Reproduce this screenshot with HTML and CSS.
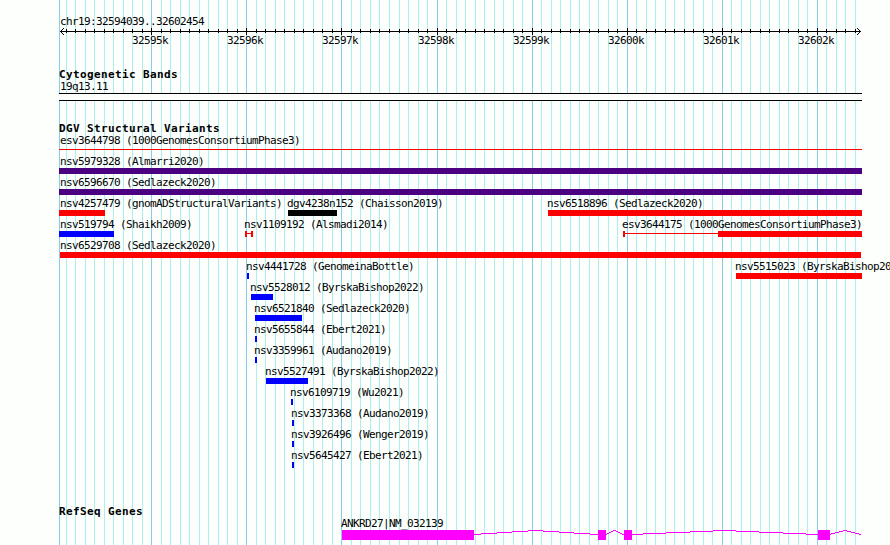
FILE: index.html
```html
<!DOCTYPE html>
<html lang="en">
<head>
<meta charset="utf-8">
<title>chr19:32594039..32602454</title>
<link rel="stylesheet" href="styles.css">
</head>
<body>
<svg class="gridlines" id="gridlines" width="890" height="545"></svg>
<main class="browser">
  <header class="scale">
    <div class="label region">chr19:32594039..32602454</div>
    <svg class="ruler" id="ruler" width="890" height="20"></svg>
  </header>
  <section class="track cytobands">
    <h2 class="title">Cytogenetic Bands</h2>
    <div class="label region">19q13.11</div>
    <div class="band"></div>
  </section>
  <section class="track variants">
    <h2 class="title">DGV Structural Variants</h2>
    <div id="variants"></div>
  </section>
  <section class="track genes">
    <h2 class="title">RefSeq Genes</h2>
    <div class="label gene-name">ANKRD27|NM_032139</div>
    <svg class="gene" width="890" height="15">
      <path class="intron" d="M474 4.5H481M481 3.5H497M497 2.5H512M512 1.5H528M528 .5H543M543 1.5H559M559 2.5H574M574 3.5H590M590 4.5H598"/>
      <path class="intron" d="M606 4.5H607M607 3.5H609M609 2.5H611M611 1.5H613M613 .5H616M616 1.5H618M618 2.5H620M620 3.5H622M622 4.5H624"/>
      <path class="intron" d="M632 4.5H643M643 3.5H666M666 2.5H690M690 1.5H713M713 .5H736M736 1.5H759M759 2.5H783M783 3.5H806M806 4.5H818"/>
      <path class="intron" d="M830 4.5H831M831 3.5H835M835 2.5H839M839 1.5H843M843 .5H847M847 1.5H851M851 2.5H855M855 3.5H859M859 4.5H861"/>
      <path class="exon" d="M342 0h132v10h-132zM598 0h8v10h-8zM624 0h8v10h-8zM818 0h12v10h-12z"/>
    </svg>
  </section>
</main>
<script src="script.js"></script>
</body>
</html>
```
FILE: styles.css
```css
body {
  margin: 0;
  width: 890px;
  height: 545px;
  overflow: hidden;
  background: #fdfffc;
  color: #000;
  font: 11px/13px "DejaVu Sans Mono", monospace;
}
svg {
  display: block;
  shape-rendering: crispEdges;
}
.gridlines {
  position: absolute;
  top: 0;
  left: 0;
}
.minor { fill: #afeeee; }
.major { fill: #87ceeb; }
.browser {
  position: relative;
  display: flex;
  flex-direction: column;
  height: 545px;
  padding-top: 15px;
  box-sizing: border-box;
}
.label {
  height: 13px;
  white-space: pre;
  letter-spacing: -0.622px;
}
.region { margin-left: 60px; }
.axis { fill: #000; }
.head {
  fill: none;
  stroke: #000;
}
.tick-label {
  font-size: 11px;
  letter-spacing: -0.622px;
}
.title {
  margin: 0 0 0 59px;
  height: 12px;
  font-size: 11px;
  line-height: 13px;
  font-weight: bold;
  letter-spacing: 0.378px;
  white-space: pre;
}
.cytobands { margin-top: 20px; }
.band {
  width: 803px;
  height: 6px;
  margin-left: 59px;
  background: #fdfffc;
  border: solid #000;
  border-width: 1px 0;
}
.variants { margin-top: 21px; }
.row {
  display: grid;
  height: 21px;
  grid-template-columns: 890px;
}
.feature { grid-area: 1 / 1; }
.glyph {
  display: flex;
  height: 6px;
}
.bar { background: currentColor; }
.line {
  height: 1px;
  margin-top: 2px;
  background: currentColor;
}
.red { color: #f00; }
.blue { color: #00f; }
.indigo { color: #4b0082; }
.black { color: #000; }
.genes { margin-top: 35px; }
.gene-name { margin: 0 0 0 341px; }
.exon { fill: #f0f; }
.intron {
  fill: none;
  stroke: #f0f;
}
```
FILE: script.js
```js
const START = 32594039;
const toX = bp => Math.round(60 + (bp - START) * 0.09506);

let lines = '<rect class="major" x="59" width="1" height="545"/>';
let ruler = '<rect class="axis" x="60" y="3" width="801" height="1"/>' +
  '<path class="head" d="M64 0L60.5 3.5L64 7M857 0L860.5 3.5L857 7"/>';

for (let bp = 32594100; bp <= 32602400; bp += 100) {
  const x = toX(bp);
  const major = bp % 1000 === 0;
  lines += `<rect class="${major ? 'major' : 'minor'}" x="${x}" width="1" height="545"/>`;
  ruler += `<rect class="axis" x="${x}" y="${major ? 0 : 1}" width="1" height="${major ? 7 : 4}"/>`;
  if (major) ruler += `<text class="tick-label" x="${x - 19}" y="16">${bp / 1000}k</text>`;
}
document.getElementById('gridlines').innerHTML = lines;
document.getElementById('ruler').innerHTML = ruler;

// name, label x, glyph x, colour, segments (positive: bar, negative: line)
const rows = [
  [['esv3644798 (1000GenomesConsortiumPhase3)', 60, 59, 'red', [-803]]],
  [['nsv5979328 (Almarri2020)', 60, 59, 'indigo', [803]]],
  [['nsv6596670 (Sedlazeck2020)', 60, 59, 'indigo', [803]]],
  [['nsv4257479 (gnomADStructuralVariants)', 60, 59, 'red', [46]],
   ['dgv4238n152 (Chaisson2019)', 287, 288, 'black', [49]],
   ['nsv6518896 (Sedlazeck2020)', 547, 548, 'red', [314]]],
  [['nsv519794 (Shaikh2009)', 60, 59, 'blue', [55]],
   ['nsv1109192 (Alsmadi2014)', 244, 245, 'red', [2, -4, 2]],
   ['esv3644175 (1000GenomesConsortiumPhase3)', 622, 623, 'red', [2, -93, 144]]],
  [['nsv6529708 (Sedlazeck2020)', 60, 60, 'red', [801]]],
  [['nsv4441728 (GenomeinaBottle)', 246, 247, 'blue', [2]],
   ['nsv5515023 (ByrskaBishop2022)', 735, 736, 'red', [126]]],
  [['nsv5528012 (ByrskaBishop2022)', 250, 251, 'blue', [22]]],
  [['nsv6521840 (Sedlazeck2020)', 254, 255, 'blue', [47]]],
  [['nsv5655844 (Ebert2021)', 254, 255, 'blue', [2]]],
  [['nsv3359961 (Audano2019)', 254, 255, 'blue', [2]]],
  [['nsv5527491 (ByrskaBishop2022)', 265, 266, 'blue', [42]]],
  [['nsv6109719 (Wu2021)', 290, 291, 'blue', [2]]],
  [['nsv3373368 (Audano2019)', 291, 292, 'blue', [2]]],
  [['nsv3926496 (Wenger2019)', 291, 292, 'blue', [2]]],
  [['nsv5645427 (Ebert2021)', 291, 292, 'blue', [2]]]
];

document.getElementById('variants').innerHTML = rows.map(row =>
  '<div class="row">' + row.map(([name, labelX, x, colour, segments]) =>
    `<div class="feature"><div class="label" style="margin-left:${labelX}px">${name}</div>` +
    `<div class="glyph ${colour}" style="margin-left:${x}px">` +
    segments.map(s => `<div class="${s > 0 ? 'bar' : 'line'}" style="width:${Math.abs(s)}px"></div>`).join('') +
    '</div></div>').join('') + '</div>').join('');
```
